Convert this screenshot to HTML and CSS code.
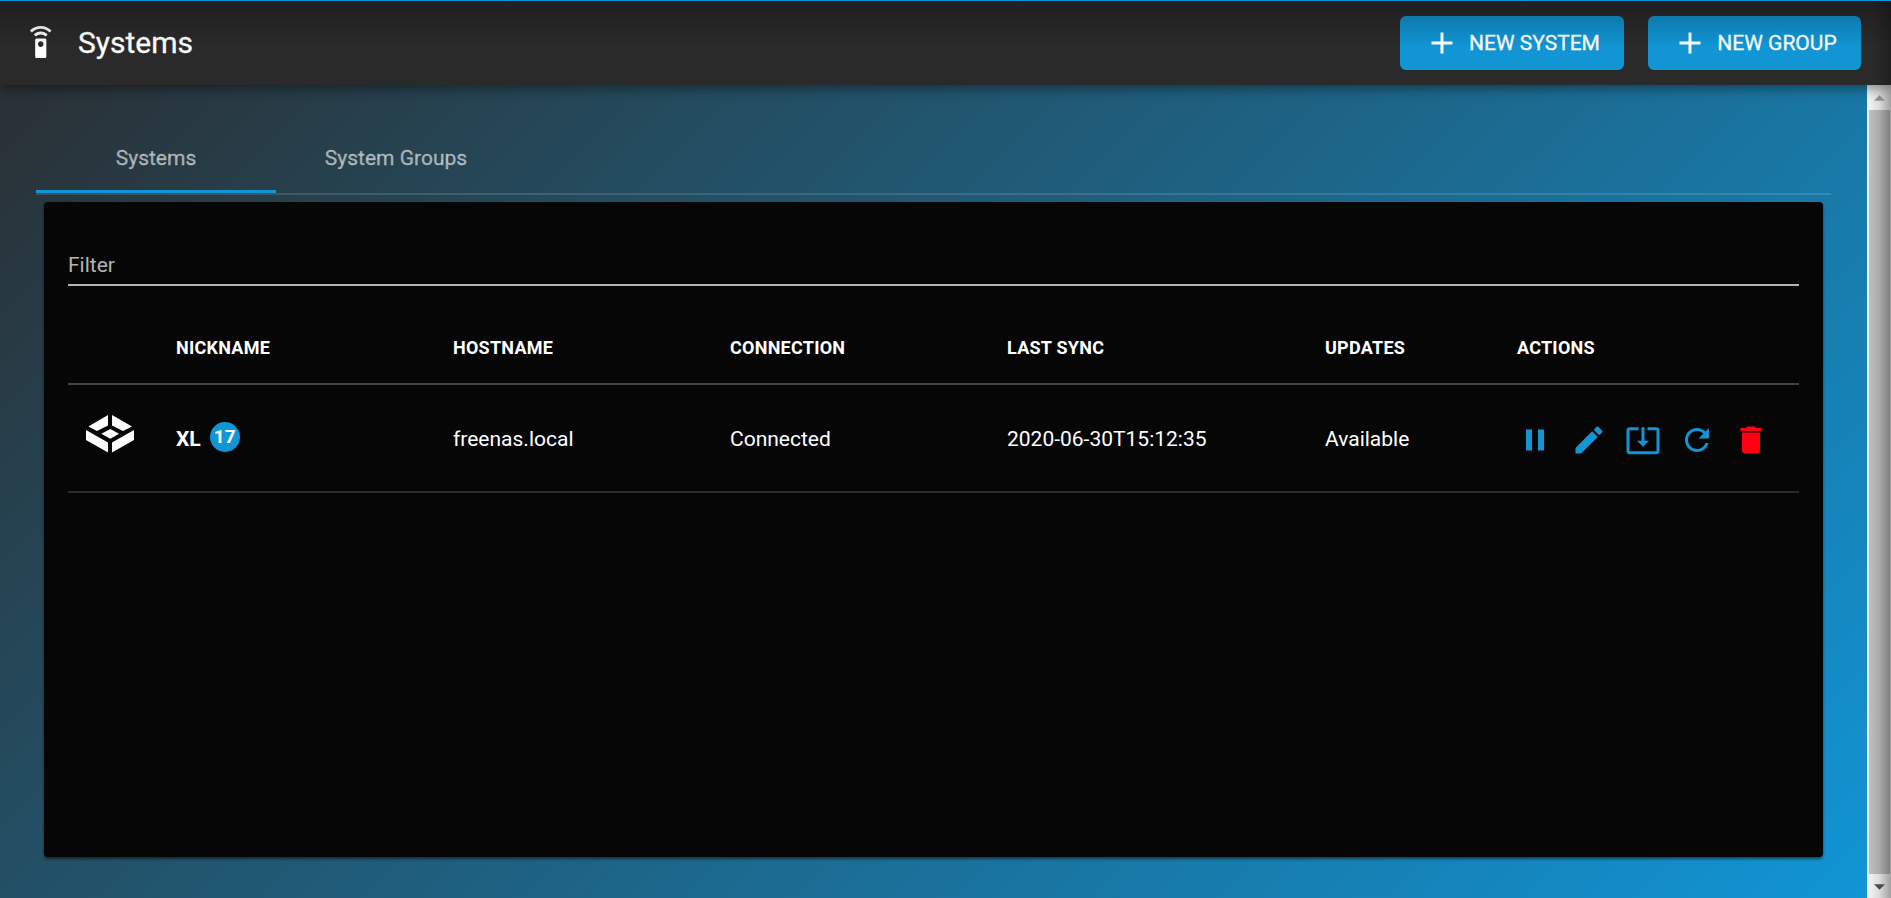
FILE: index.html
```html
<!DOCTYPE html>
<html lang="en">
<head>
<meta charset="utf-8">
<title>Systems</title>
<link rel="stylesheet" href="styles.css">
</head>
<body>
<header class="header">
  <svg class="header-icon" viewBox="0 0 24 24"><path d="M15 9H9c-.55 0-1 .45-1 1v12c0 .55.45 1 1 1h6c.55 0 1-.45 1-1V10c0-.55-.45-1-1-1zm-3 6c-1.1 0-2-.9-2-2s.9-2 2-2 2 .9 2 2-.9 2-2 2zM7.05 6.05l1.41 1.41C9.37 6.56 10.62 6 12 6s2.63.56 3.54 1.46l1.41-1.41C15.68 4.78 13.93 4 12 4s-3.68.78-4.95 2.05zM12 0C8.96 0 6.21 1.23 4.22 3.22l1.41 1.41C7.26 3.01 9.51 2 12 2s4.74 1.01 6.36 2.64l1.41-1.41C17.79 1.23 15.04 0 12 0z"/></svg>
  <h1 class="title">Systems</h1>
  <div class="header-actions">
    <button class="button"><svg class="icon" viewBox="0 0 24 24"><path d="M19 13h-6v6h-2v-6H5v-2h6V5h2v6h6v2z"/></svg><span class="button-label system-label">NEW SYSTEM</span></button>
    <button class="button"><svg class="icon" viewBox="0 0 24 24"><path d="M19 13h-6v6h-2v-6H5v-2h6V5h2v6h6v2z"/></svg><span class="button-label group-label">NEW GROUP</span></button>
  </div>
</header>
<div class="body-row">
  <main class="content">
    <nav class="tabs">
      <a class="tab tab-active"><span>Systems</span></a>
      <a class="tab"><span>System Groups</span></a>
    </nav>
    <section class="card">
      <div class="filter"><span>Filter</span></div>
      <div class="row head-row">
        <span></span><span>NICKNAME</span><span>HOSTNAME</span><span>CONNECTION</span><span>LAST SYNC</span><span>UPDATES</span><span>ACTIONS</span>
      </div>
      <div class="row data-row">
        <span class="logo-cell"><svg class="logo" viewBox="0 0 144 112"><path d="M66 0v31L33 48 7 34zM78 0v31l33 17 27-14zM73 42l26 14-26 15-27-15zM0 45l66 37v30L0 75zM144 45v30l-66 37V82z"/></svg></span>
        <span class="nickname"><b class="name">XL</b><b class="badge">17</b></span>
        <span>freenas.local</span>
        <span>Connected</span>
        <span>2020-06-30T15:12:35</span>
        <span>Available</span>
        <span class="actions">
          <svg class="icon" viewBox="0 0 24 24"><path d="M6 19h4V5H6v14zm8-14v14h4V5h-4z"/></svg>
          <svg class="icon" viewBox="0 0 24 24"><path d="M3 17.25V21h3.75L17.81 9.94l-3.75-3.75L3 17.25zM20.71 7.04c.39-.39.39-1.02 0-1.41l-2.34-2.34c-.39-.39-1.02-.39-1.41 0l-1.83 1.83 3.75 3.75 1.83-1.83z"/></svg>
          <svg class="icon" viewBox="0 0 24 24"><path d="M12 16.5l4-4h-3v-9h-2v9H8l4 4zm9-13h-6v1.99h6v14.03H3V5.49h6V3.5H3c-1.1 0-2 .9-2 2v14c0 1.1.9 2 2 2h18c1.1 0 2-.9 2-2v-14c0-1.1-.9-2-2-2z"/></svg>
          <svg class="icon" viewBox="0 0 24 24"><path d="M17.65 6.35C16.2 4.9 14.21 4 12 4c-4.42 0-7.99 3.58-7.99 8s3.57 8 7.99 8c3.73 0 6.84-2.55 7.73-6h-2.08c-.82 2.33-3.04 4-5.65 4-3.31 0-6-2.69-6-6s2.69-6 6-6c1.66 0 3.14.69 4.22 1.78L13 11h7V4l-2.35 2.35z"/></svg>
          <svg class="icon icon-delete" viewBox="0 0 24 24"><path d="M6 19c0 1.1.9 2 2 2h8c1.1 0 2-.9 2-2V7H6v12zM19 4h-3.500l-1-1h-5l-1 1H5v2h14V4z"/></svg>
        </span>
      </div>
    </section>
  </main>
  <aside class="scrollbar">
    <svg class="arrow" viewBox="0 0 12 6"><path d="M6 0l6 6H0z" fill="#8f8f8f"/></svg>
    <div class="thumb"></div>
    <svg class="arrow" viewBox="0 0 12 6"><path d="M0 0h12L6 6z" fill="#4b4b4b"/></svg>
  </aside>
</div>
</body>
</html>
```
FILE: styles.css
```css
* { box-sizing: border-box; }
body {
  margin: 0;
  height: 898px;
  overflow: hidden;
  display: flex;
  flex-direction: column;
  font-family: Roboto, "Liberation Sans", sans-serif;
  font-size: 21px;
  color: #fff;
  background: #282828;
}
.header {
  position: relative;
  z-index: 1;
  flex: none;
  height: 85px;
  display: flex;
  align-items: center;
  padding: 0 30px 0 24px;
  border-top: 1px solid #1195d5;
  background: #2a2a2a;
  box-shadow: 0 3px 12px rgba(0, 0, 0, .45);
}
.header::after {
  content: "";
  position: absolute;
  inset: 0;
  pointer-events: none;
  background:
    linear-gradient(to bottom, rgba(0, 0, 0, .28), rgba(0, 0, 0, 0) 46px),
    linear-gradient(to left, rgba(0, 0, 0, .25), rgba(0, 0, 0, 0) 18px);
}
.header-icon { width: 33.500px; height: 33.500px; fill: #fff; }
.title { margin: 0 auto 0 20.500px; font-size: 30px; font-weight: 400; line-height: 36px; -webkit-text-stroke: .3px; }
.header-actions { display: flex; gap: 24px; }
.button {
  display: flex;
  align-items: center;
  gap: 9px;
  height: 54px;
  padding: 0 24px;
  border: 0;
  border-radius: 6px;
  background: #1195d5;
  color: #fff;
  font: 400 21px/54px Roboto, "Liberation Sans", sans-serif;
}
.button-label { white-space: nowrap; -webkit-text-stroke: .3px; }
.system-label { width: 131px; }
.group-label { width: 120px; }
.icon { flex: none; width: 36px; height: 36px; fill: currentColor; }
.body-row { flex: 1; display: flex; min-height: 0; }
.content {
  flex: 1;
  padding: 36px 36px 41px;
  display: flex;
  flex-direction: column;
  background: linear-gradient(135deg, #2a3035 0%, #264351 18%, #1195d5 100%);
}
.tabs {
  display: flex;
  height: 74px;
  border-bottom: 2px solid rgba(255, 255, 255, .12);
}
.tab {
  height: 72px;
  display: flex;
  align-items: center;
  justify-content: center;
  width: 240px;
  padding-top: 4px;
  border-bottom: 3px solid transparent;
  color: rgba(255, 255, 255, .57);
  -webkit-text-stroke: .3px;
}
.tab-active { border-color: #1195d5; }
.card {
  flex: 1;
  margin: 7px 8px 0;
  padding: 0 24px;
  border-radius: 4px;
  background: #060606;
  box-shadow: 0 2px 3px rgba(0, 0, 0, .5);
}
.filter {
  height: 84px;
  padding-top: 50px;
  line-height: 26px;
  border-bottom: 2px solid #b4b4b4;
  color: #b4b4b4;
}
.row {
  display: grid;
  grid-template-columns: 108px 277px 277px 277px 318px 192px 1fr;
  align-items: center;
}
.head-row {
  height: 99px;
  padding-top: 25px;
  border-bottom: 2px solid #444;
  font-size: 18px;
  font-weight: 700;
  letter-spacing: .25px;
}
.data-row { height: 108px; padding-top: 2px; border-bottom: 2px solid #2b2b2b; }
.logo-cell { padding: 0 0 10px 18px; }
.logo { display: block; width: 48px; height: 37.500px; fill: #fff; }
.nickname { display: flex; align-items: center; }
.name { font-weight: 700; }
.badge {
  width: 30px;
  height: 30px;
  margin: -4px 0 0 9px;
  border-radius: 50%;
  background: #1195d5;
  font-size: 19px;
  font-weight: 700;
  line-height: 30px;
  text-align: center;
}
.actions { display: flex; gap: 18px; padding-top: 2px; color: #1195d5; }
.icon-delete { color: #ff0013; }
.scrollbar {
  width: 24px;
  display: flex;
  flex-direction: column;
  align-items: center;
  justify-content: space-between;
  padding: 10px 1px 8px 2px;
  background: linear-gradient(to right, #f1f1f1 10%, #dcdcdc 50%, #a0a0a0);
}
.thumb { width: 21px; height: 764px; margin-top: -2px; background: linear-gradient(to right, #bfbfbf, #aaa 50%, #808080); }
.arrow { width: 11px; height: 6px; }
```
